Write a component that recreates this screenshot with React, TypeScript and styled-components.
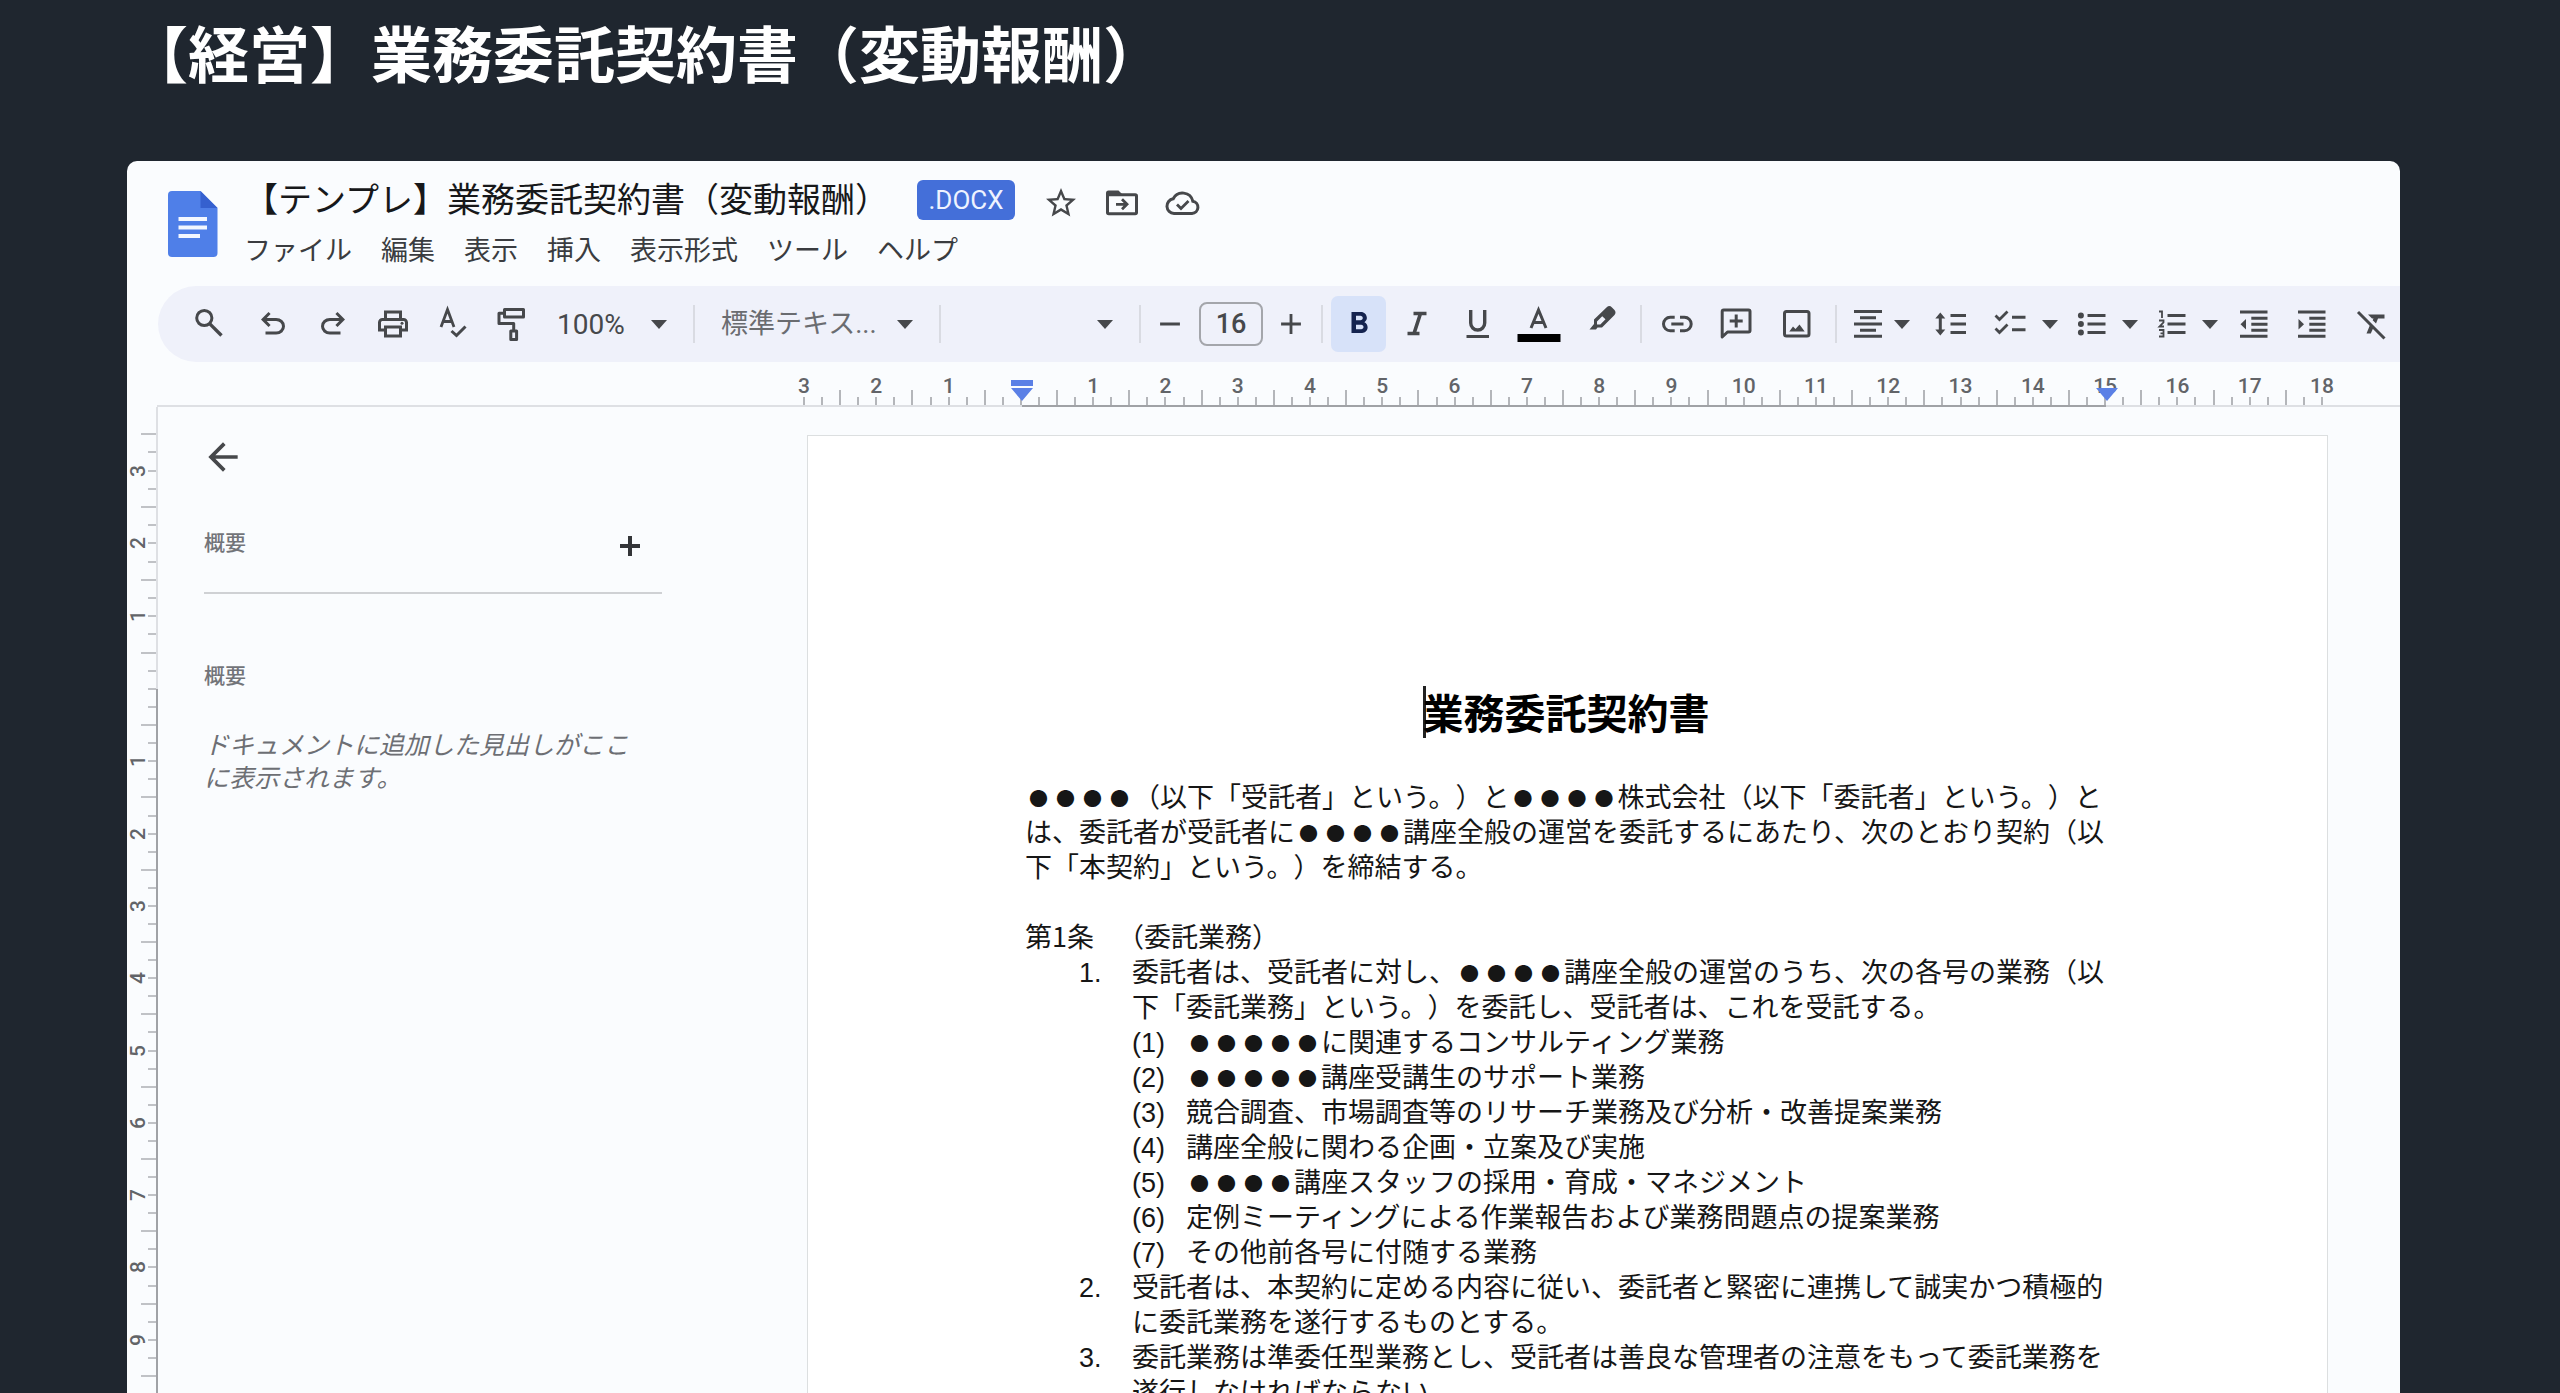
import React from "react";
import styled, { createGlobalStyle, css } from "styled-components";
import { MdAdd, MdArrowBack, MdFormatBold, MdRemove, MdStarBorder } from "react-icons/md";

const ink = "#46484b";
const uiFont = `Roboto, "Noto Sans CJK JP", sans-serif`;
const textFont = `"Noto Sans CJK JP", "Liberation Sans", sans-serif`;

const GlobalStyle = createGlobalStyle`
  * { box-sizing: border-box; }
  body {
    margin: 0;
    background: #1f262f;
    font-family: ${uiFont};
    text-spacing-trim: space-all;
  }
  h1, h2, h3, p, ol { margin: 0; padding: 0; font-weight: 400; }
  button, input, select {
    font: inherit;
    color: inherit;
    margin: 0;
    padding: 0;
    border: 0;
    background: none;
  }
`;

/* ---------- page frame ---------- */

const Page = styled.main`
  display: flex;
  flex-direction: column;
  height: 100vh;
  padding: 22px 160px 0 127px;
  overflow: hidden;
`;

const PageTitle = styled.h1`
  margin-bottom: 79px;
  font: 700 61px/60px ${textFont};
  color: #fff;
  white-space: nowrap;
`;

const Editor = styled.section`
  display: flex;
  flex: 1;
  flex-direction: column;
  min-height: 0;
  overflow: hidden;
  border-radius: 10px 10px 0 0;
  background: #fafcfe;
`;

/* ---------- header ---------- */

const Header = styled.header`
  display: flex;
  gap: 26px;
  padding: 19px 40px 20px 41px;
`;

const DocLogo = styled.svg`
  flex: none;
  width: 50px;
  height: 66px;
  margin-top: 11px;
`;

const HeaderText = styled.div`
  display: flex;
  flex-direction: column;
  gap: 16px;
`;

const TitleRow = styled.div`
  display: flex;
  align-items: center;
  gap: 28px;
  height: 40px;
`;

const TitleActions = styled.div`
  display: flex;
  gap: 25px;
  padding-top: 6px;
`;

const DocTitle = styled.h2`
  font-size: 34px;
  line-height: 40px;
  color: #17181a;
  white-space: nowrap;
`;

const FormatBadge = styled.span`
  display: flex;
  align-items: center;
  justify-content: center;
  width: 98px;
  height: 40px;
  border-radius: 6px;
  background: #446fd9;
  color: #eef3ff;
  font-size: 26px;
  line-height: 40px;
`;

const MenuBar = styled.nav`
  display: flex;
  gap: 29px;
`;

const MenuButton = styled.button`
  font-size: 27px;
  line-height: 30px;
  color: #3a3c40;
  white-space: nowrap;
`;

/* ---------- toolbar ---------- */

const Toolbar = styled.div`
  display: flex;
  flex: none;
  align-items: center;
  height: 76px;
  margin-left: 31px;
  padding-left: 17px;
  overflow: hidden;
  border-radius: 38px 0 0 38px;
  background: #eff1fa;
  color: ${ink};
`;

const IconButton = styled.button<{ $w?: number }>`
  display: flex;
  flex: none;
  align-items: center;
  justify-content: center;
  width: ${(p) => p.$w ?? 60}px;
  height: 56px;
  color: ${ink};
`;

const ActionButton = styled(IconButton)`
  width: 36px;
  height: 36px;
`;

const ToggleButton = styled(IconButton)`
  margin-left: 8px;
  border-radius: 7px;
  background: #d7e2f9;
  color: #14234f;
`;

const SplitButton = styled.button<{ $w: number }>`
  display: flex;
  flex: none;
  align-items: center;
  justify-content: space-between;
  width: ${(p) => p.$w}px;
  height: 56px;
  padding: 0 8px;
  color: ${ink};
`;

const Divider = styled.span<{ $before?: number; $after?: number }>`
  flex: none;
  width: 2px;
  height: 38px;
  margin: 0 ${(p) => p.$after ?? 0}px 0 ${(p) => p.$before ?? 0}px;
  background: #d9dbe2;
`;

const SelectBox = styled.label<{ $w: number; $pad: number; $muted?: boolean }>`
  display: flex;
  flex: none;
  align-items: center;
  width: ${(p) => p.$w}px;
  padding: 0 26px 0 ${(p) => p.$pad}px;
  font-size: ${(p) => (p.$muted ? 27 : 28)}px;
  color: ${(p) => (p.$muted ? "#6a6c70" : ink)};

  select {
    flex: 1;
    min-width: 0;
    height: 40px;
    appearance: none;
  }
  svg { color: ${ink}; }
`;

const SizeInput = styled.input`
  flex: none;
  width: 64px;
  height: 44px;
  border: 2px solid #a4a6ab;
  border-radius: 8px;
  font-size: 27px;
  font-weight: 500;
  text-align: center;
`;

const Glyph = styled.svg<{ $w?: number }>`
  flex: none;
  width: ${(p) => p.$w ?? 36}px;
  height: 36px;
  overflow: visible;
  fill: none;
  stroke: currentColor;
  stroke-width: 3;
`;

const SolidGlyph = styled(Glyph)`
  fill: currentColor;
  stroke: none;
`;

const ArrowGlyph = styled.svg`
  flex: none;
  width: 16px;
  height: 9px;
  fill: currentColor;
`;

const Arrow = () => (
  <ArrowGlyph viewBox="0 0 16 9" aria-hidden="true">
    <path d="M0 0h16L8 9z" />
  </ArrowGlyph>
);

const Lines = ({ rows }: { rows: [number, number, number][] }) => (
  <path d={rows.map(([y, from, to]) => `M${from} ${y}H${to}`).join("")} />
);

const icons = {
  search: (
    <Glyph viewBox="0 0 36 36">
      <circle cx="13.3" cy="12" r="7.6" />
      <path d="M18.6 17.6L30.5 29.5" strokeWidth="3.4" />
    </Glyph>
  ),
  undo: (
    <SolidGlyph viewBox="0 -960 960 960">
      <path d="M280-200v-80h284q63 0 109.500-40T720-420q0-60-46.500-100T564-560H312l104 104-56 56-200-200 200-200 56 56-104 104h252q97 0 166.500 63T800-420q0 94-69.500 157T564-200H280Z" />
    </SolidGlyph>
  ),
  redo: (
    <SolidGlyph viewBox="0 -960 960 960">
      <path d="M396-200q-97 0-166.500-63T160-420q0-94 69.500-157T396-640h252L544-744l56-56 200 200-200 200-56-56 104-104H396q-63 0-109.500 40T240-420q0 60 46.500 100T396-280h284v80H396Z" />
    </SolidGlyph>
  ),
  print: (
    <SolidGlyph viewBox="0 0 24 24">
      <path d="M19 8h-1V3H6v5H5c-1.660 0-3 1.340-3 3v6h4v4h12v-4h4v-6c0-1.660-1.340-3-3-3zM8 5h8v3H8V5zm8 12v2H8v-4h8v2zm2-2v-2H6v2H4v-4c0-.55.45-1 1-1h14c.55 0 1 .45 1 1v4h-2z" />
      <circle cx="18" cy="11.500" r="1" />
    </SolidGlyph>
  ),
  spell: (
    <Glyph viewBox="0 0 36 36">
      <path d="M6 21L12.500 3.500L19 21M8.500 15.500H16.500" strokeWidth="2.800" />
      <path d="M16.500 25L21.500 29.500L30.500 20.500" />
    </Glyph>
  ),
  paint: (
    <Glyph viewBox="0 0 36 36" strokeLinejoin="round">
      <path d="M11.500 3.500H30.500V11H11.500ZM11.500 7.300H6V17.500H20.700V25M17.800 25H23.600V33.500H17.800Z" />
    </Glyph>
  ),
  italic: (
    <Glyph viewBox="0 0 36 36">
      <path d="M14.500 7.500H27.500M8.500 27.500H20.500M21.500 7.500L15 27.500" strokeWidth="3.600" />
    </Glyph>
  ),
  underline: (
    <Glyph viewBox="0 0 36 36">
      <path d="M10.700 4V17a7 7 0 0 0 14 0V4" strokeWidth="3.400" />
      <path d="M6.500 30.500H29" />
    </Glyph>
  ),
  textColor: (
    <Glyph viewBox="0 0 44 36" $w={44}>
      <path d="M14 22L21.500 4L29 22M16.500 16.500H26.500" />
      <path d="M.5 32H43.500" stroke="#000" strokeWidth="8" />
    </Glyph>
  ),
  highlight: (
    <SolidGlyph viewBox="0 0 36 36" fillRule="evenodd">
      <path d="M5.500 23.500L10 18V13.500L23 1Q25.500-1 28 1.500L30.500 4Q32.500 6.500 30.500 9L18 21.500H13.500L12 23.500ZM13 15.500V18.500H16.300L21.500 13.300L18.200 10.200Z" />
    </SolidGlyph>
  ),
  link: (
    <Glyph viewBox="0 0 36 36">
      <path d="M15.700 11.300H11.200a6.700 6.700 0 0 0 0 13.400H15.700M21 11.300H25.500a6.700 6.700 0 0 1 0 13.400H21M12.300 18H24.500" />
    </Glyph>
  ),
  comment: (
    <Glyph viewBox="0 0 36 36" strokeLinejoin="round">
      <path d="M4.200 31V5.500Q4.200 4 5.700 4H30.500Q32 4 32 5.500V24.500Q32 26 30.500 26H9.500Z" />
      <path d="M18.200 8.500V21.500M11.700 15H24.700" />
    </Glyph>
  ),
  image: (
    <Glyph viewBox="0 0 36 36">
      <rect x="6.500" y="5.500" width="24.500" height="24.500" rx="2" />
      <path d="M11.300 25.500L15 20.500L17.500 23L21.500 18.500L26.700 25.500Z" fill="currentColor" stroke="none" />
    </Glyph>
  ),
  align: (
    <Glyph viewBox="0 0 36 36">
      <Lines rows={[[5.5, 4, 32], [11.7, 10, 26], [18, 4, 32], [24.2, 10, 26], [30.3, 4, 32]]} />
    </Glyph>
  ),
  spacing: (
    <Glyph viewBox="0 0 36 36">
      <Lines rows={[[9.5, 17.5, 33], [18, 17.5, 33], [26.5, 17.5, 33]]} />
      <path d="M7.300 10V26" />
      <path d="M7.300 6.500L12.300 12.500H2.300ZM7.300 29.500L12.300 23.500H2.300Z" fill="currentColor" stroke="none" />
    </Glyph>
  ),
  checklist: (
    <Glyph viewBox="0 0 36 36">
      <Lines rows={[[11.3, 20, 33.5], [23.8, 20, 33.5]]} />
      <path d="M3.500 9.500L7.500 13.500L15.500 5.500M3.500 22.500L7.500 26.500L15.500 18.500" strokeWidth="2.800" />
    </Glyph>
  ),
  bullets: (
    <Glyph viewBox="0 0 36 36">
      <Lines rows={[[9.5, 13.5, 31.5], [18, 13.5, 31.5], [26.5, 13.5, 31.5]]} />
      <path d="M6.900 9.500h.01M6.900 18h.01M6.900 26.500h.01" strokeWidth="6" strokeLinecap="round" />
    </Glyph>
  ),
  numbers: (
    <Glyph viewBox="0 0 36 36">
      <Lines rows={[[9.5, 13.5, 31.5], [18, 13.5, 31.5], [26.5, 13.5, 31.5]]} />
      <path d="M5 5.500H8V12M5 14.500H9.500V16.500L5.500 20.500H10M5 24H9.500V30.500H5M6.500 27.300H9.500" strokeWidth="1.800" />
    </Glyph>
  ),
  outdent: (
    <Glyph viewBox="0 0 36 36">
      <Lines rows={[[6, 4, 31.5], [12.2, 15.3, 31.5], [18.2, 15.3, 31.5], [24.2, 15.3, 31.5], [30.2, 4, 31.5]]} />
      <path d="M10 13V23.500L4.500 18.200Z" fill="currentColor" stroke="none" />
    </Glyph>
  ),
  indent: (
    <Glyph viewBox="0 0 36 36">
      <Lines rows={[[6, 4, 31.5], [12.2, 15.3, 31.5], [18.2, 15.3, 31.5], [24.2, 15.3, 31.5], [30.2, 4, 31.5]]} />
      <path d="M4.500 13V23.500L10 18.200Z" fill="currentColor" stroke="none" />
    </Glyph>
  ),
  clear: (
    <Glyph viewBox="0 0 36 36">
      <path d="M5 6L31.500 32.500" />
      <path d="M15 8.500H31.500V12.500H25L23 17.500L19.700 14.300L20.500 12.500H19ZM17.500 17.800L20.700 21L17.800 27.500H13.500Z" fill="currentColor" stroke="none" />
    </Glyph>
  ),
  plus: (
    <Glyph viewBox="0 0 36 36">
      <path d="M18 8V28M8 18H28" strokeWidth="4" />
    </Glyph>
  ),
  move: (
    <Glyph viewBox="0 0 36 36">
      <path d="M3.500 8V27.500Q3.500 28.800 4.800 28.800H31.200Q32.500 28.800 32.500 27.500V11Q32.500 9.700 31.200 9.700H3.500" />
      <path d="M2 11V8Q2 5.500 4.500 5.500H14.500L18.500 9.500V11Z" fill="currentColor" stroke="none" />
      <path d="M12 19.300H23M18 14.300L23 19.300L18 24.300" strokeWidth="2.800" />
    </Glyph>
  ),
  cloud: (
    <Glyph viewBox="0 0 36 36">
      <path d="M9 28.500a7.400 7.400 0 0 1-.8-14.700a10.500 10.500 0 0 1 19.600 2.400a6.200 6.200 0 0 1-.8 12.300Z" />
      <path d="M12 19.500L16 23.500L23.500 16" strokeWidth="2.800" />
    </Glyph>
  ),
};

/* ---------- rulers ---------- */

const HRuler = styled.div`
  position: relative;
  display: flex;
  flex: none;
  flex-direction: column;
  justify-content: space-between;
  height: 45px;
  margin-left: 30px;
`;

const HScale = styled.div`
  display: grid;
  grid-template-columns: repeat(85, minmax(0, 1fr));
  height: 43px;
  margin: 0 69px 0 638px;
`;

const HCell = styled.div`
  display: flex;
  flex-direction: column;
  align-items: center;
  justify-content: flex-end;
`;

const TickLabel = styled.span`
  flex: none;
  font-size: 21px;
  line-height: 22px;
  font-weight: 500;
  color: #626468;
`;

const HTick = styled.span<{ $tall: boolean }>`
  flex: none;
  width: 2px;
  height: ${(p) => (p.$tall ? 15 : 8)}px;
  background: #b4b6ba;
`;

const HLine = styled.div`
  display: grid;
  grid-template-columns: 865px minmax(0, 1084fr) minmax(0, 294fr);
  height: 2px;

  span { background: #dee0e4; }
  span:nth-child(2) { background: #a0a2a6; }
`;

const Marker = styled.svg<{ $left: number }>`
  position: absolute;
  top: 18px;
  left: ${(p) => p.$left}px;
  width: 24px;
  height: 21px;
  fill: #5b80e6;
`;

const Body = styled.div`
  display: flex;
  flex: 1;
  min-height: 0;
`;

const VRuler = styled.div`
  display: flex;
  flex: none;
  width: 31px;
`;

const VTrack = styled.div`
  flex: 1;
  padding-top: 18px;
`;

const VScale = styled.div<{ $rows: number; $height: number }>`
  display: grid;
  grid-template-rows: repeat(${(p) => p.$rows}, minmax(0, 1fr));
  height: ${(p) => p.$height}px;
`;

const VCell = styled.div`
  display: flex;
  align-items: center;
  justify-content: flex-end;

  ${TickLabel} {
    width: 20px;
    text-align: center;
    transform: rotate(-90deg);
  }
`;

const VTick = styled.span<{ $tall: boolean }>`
  flex: none;
  width: ${(p) => (p.$tall ? 15 : 8)}px;
  height: 2px;
  background: #c0c2c6;
`;

const VLine = styled.div`
  display: grid;
  grid-template-rows: 282px 1fr;
  width: 2px;

  span { background: #dee0e4; }
  span:nth-child(2) { background: #a0a2a6; }
`;

const HorizontalRuler = () => (
  <HRuler aria-hidden="true">
    <HScale>
      {Array.from({ length: 85 }, (_, i) => {
        const label = Math.abs(i / 4 - 3);
        return (
          <HCell key={i}>
            {i % 4 === 0 && label !== 0 && <TickLabel>{label}</TickLabel>}
            <HTick $tall={i % 4 === 2} />
          </HCell>
        );
      })}
    </HScale>
    <HLine><span /><span /><span /></HLine>
    <Marker $left={853} viewBox="0 0 24 21">
      <path d="M1 0H23V6H1ZM1 8H23L12 21Z" />
    </Marker>
    <Marker $left={1938} viewBox="0 0 24 21">
      <path d="M1 8H23L12 21Z" />
    </Marker>
  </HRuler>
);

const VerticalRuler = () => (
  <VRuler aria-hidden="true">
    <VTrack>
      <VScale $rows={14} $height={255}>
        {Array.from({ length: 14 }, (_, i) => (
          <VCell key={i}>
            {i % 4 === 2 && <TickLabel>{(14 - i) / 4}</TickLabel>}
            <VTick $tall={i % 4 === 0} />
          </VCell>
        ))}
      </VScale>
      <VScale $rows={40} $height={723}>
        {Array.from({ length: 40 }, (_, i) => (
          <VCell key={i}>
            {i % 4 === 0 && i > 0 && <TickLabel>{i / 4}</TickLabel>}
            <VTick $tall={i % 4 === 2} />
          </VCell>
        ))}
      </VScale>
    </VTrack>
    <VLine><span /><span /></VLine>
  </VRuler>
);

/* ---------- outline panel ---------- */

const Outline = styled.aside`
  flex: none;
  width: 649px;
  padding: 28px 145px 0 46px;
`;

const BackButton = styled.button`
  display: flex;
  align-items: center;
  justify-content: center;
  width: 38px;
  height: 44px;
  margin-bottom: 47px;
  color: ${ink};

  svg { flex: none; width: 44px; height: 44px; }
`;

const OutlineRow = styled.div`
  display: flex;
  justify-content: space-between;
  height: 38px;
  margin-bottom: 28px;
  padding-right: 14px;
`;

const AddButton = styled(ActionButton)`
  align-self: flex-end;
  color: #333538;
`;

const OutlineTitle = styled.h3`
  font: 500 21px/30px ${textFont};
  color: #727479;
`;

const OutlineRule = styled.hr`
  height: 2px;
  margin: 0 0 65px;
  border: 0;
  background: #cfd1d4;
`;

const OutlineHint = styled.p`
  margin-top: 38px;
  padding-right: 16px;
  font: italic 400 25px/33px ${textFont};
  color: #6d6f74;
`;

/* ---------- document ---------- */

const Paper = styled.article`
  flex: 1;
  min-width: 0;
  margin: 28px 72px 0 0;
  padding: 250px 220px 0 217px;
  border: 1px solid #dcdfe0;
  border-bottom: 0;
  background: #fff;
  color: #161616;
  font: 400 27px/35px ${textFont};
`;

const PaperTitle = styled.h2`
  display: flex;
  justify-content: center;
  margin-bottom: 40px;
  font-size: 41px;
  line-height: 50px;
  font-weight: 700;
  color: #000;

  span {
    width: 3px;
    height: 52px;
    margin-right: -3px;
    background: #222;
  }
`;

const ArticleTitle = styled.h3`
  display: flex;
  margin-top: 35px;
  font-size: 27px;
  line-height: 35px;

  span { width: 92px; }
`;

const listLine = css`
  display: grid;
  align-items: baseline;
  list-style: none;
`;

const Clauses = styled.ol`
  padding-left: 54px;
`;

const Clause = styled.li`
  ${listLine}
  grid-template-columns: 53px minmax(0, 1fr);
`;

const Items = styled.ol`
  padding: 0;
`;

const Item = styled.li`
  ${listLine}
  grid-template-columns: 54px minmax(0, 1fr);
`;

const Num = styled.span`
  font-family: "Liberation Sans", sans-serif;
  line-height: 24px;
`;

const DotMark = styled.span`
  display: inline-block;
  width: 27px;
  font-size: 19px;
  line-height: 20px;
  vertical-align: 1px;
  text-align: center;
`;

const Dots = ({ n = 4 }: { n?: number }) => (
  <>
    {Array.from({ length: n }, (_, i) => (
      <DotMark key={i}>●</DotMark>
    ))}
  </>
);

const duties: React.ReactNode[] = [
  <><Dots n={5} />に関連するコンサルティング業務</>,
  <><Dots n={5} />講座受講生のサポート業務</>,
  "競合調査、市場調査等のリサーチ業務及び分析・改善提案業務",
  "講座全般に関わる企画・立案及び実施",
  <><Dots />講座スタッフの採用・育成・マネジメント</>,
  "定例ミーティングによる作業報告および業務問題点の提案業務",
  "その他前各号に付随する業務",
];

const menus = ["ファイル", "編集", "表示", "挿入", "表示形式", "ツール", "ヘルプ"];

export default function App() {
  return (
    <Page>
      <GlobalStyle />
      <PageTitle>【経営】業務委託契約書（変動報酬）</PageTitle>
      <Editor>
        <Header>
          <DocLogo viewBox="0 0 50 66" aria-hidden="true">
            <path d="M4 0H32.500L49.500 17V62a4 4 0 0 1-4 4H4a4 4 0 0 1-4-4V4a4 4 0 0 1 4-4Z" fill="#4f7fe8" />
            <path d="M32.500 0L49.500 17H32.500Z" fill="#3560cf" />
            <path d="M10.500 28H39M10.500 36.500H39M10.500 45H32" stroke="#f3f7ff" strokeWidth="4" />
          </DocLogo>
          <HeaderText>
            <TitleRow>
              <DocTitle>【テンプレ】業務委託契約書（変動報酬）</DocTitle>
              <FormatBadge>.DOCX</FormatBadge>
              <TitleActions>
                <ActionButton aria-label="スターを付ける"><MdStarBorder size={36} /></ActionButton>
                <ActionButton aria-label="移動">{icons.move}</ActionButton>
                <ActionButton aria-label="保存状態">{icons.cloud}</ActionButton>
              </TitleActions>
            </TitleRow>
            <MenuBar>
              {menus.map((m) => <MenuButton key={m}>{m}</MenuButton>)}
            </MenuBar>
          </HeaderText>
        </Header>

        <Toolbar role="toolbar">
          <IconButton $w={68} aria-label="検索">{icons.search}</IconButton>
          <IconButton aria-label="元に戻す">{icons.undo}</IconButton>
          <IconButton aria-label="やり直し">{icons.redo}</IconButton>
          <IconButton aria-label="印刷">{icons.print}</IconButton>
          <IconButton aria-label="スペルチェック">{icons.spell}</IconButton>
          <IconButton $w={56} aria-label="書式の貼り付け">{icons.paint}</IconButton>
          <SelectBox $w={154} $pad={18}>
            <select aria-label="ズーム"><option>100%</option></select>
            <Arrow />
          </SelectBox>
          <Divider />
          <SelectBox $w={244} $pad={26} $muted>
            <select aria-label="スタイル"><option>標準テキス...</option></select>
            <Arrow />
          </SelectBox>
          <Divider />
          <SelectBox $w={198} $pad={26}>
            <select aria-label="フォント"><option></option></select>
            <Arrow />
          </SelectBox>
          <Divider />
          <IconButton $w={58} aria-label="縮小"><MdRemove size={34} /></IconButton>
          <SizeInput aria-label="フォントサイズ" defaultValue="16" />
          <IconButton $w={56} aria-label="拡大"><MdAdd size={34} /></IconButton>
          <Divider $before={2} />
          <ToggleButton $w={55} aria-label="太字"><MdFormatBold size={36} /></ToggleButton>
          <IconButton $w={62} aria-label="斜体">{icons.italic}</IconButton>
          <IconButton aria-label="下線">{icons.underline}</IconButton>
          <IconButton $w={62} aria-label="文字色">{icons.textColor}</IconButton>
          <IconButton $w={64} aria-label="ハイライト">{icons.highlight}</IconButton>
          <Divider $before={6} $after={6} />
          <IconButton $w={58} aria-label="リンク">{icons.link}</IconButton>
          <IconButton aria-label="コメント">{icons.comment}</IconButton>
          <IconButton aria-label="画像">{icons.image}</IconButton>
          <Divider $before={9} $after={5} />
          <SplitButton $w={76} aria-label="配置">{icons.align}<Arrow /></SplitButton>
          <IconButton $w={66} aria-label="行間隔">{icons.spacing}</IconButton>
          <SplitButton $w={82} aria-label="チェックリスト">{icons.checklist}<Arrow /></SplitButton>
          <SplitButton $w={80} aria-label="箇条書き">{icons.bullets}<Arrow /></SplitButton>
          <SplitButton $w={80} aria-label="番号付きリスト">{icons.numbers}<Arrow /></SplitButton>
          <IconButton $w={56} aria-label="インデント減">{icons.outdent}</IconButton>
          <IconButton aria-label="インデント増">{icons.indent}</IconButton>
          <IconButton $w={58} aria-label="書式をクリア">{icons.clear}</IconButton>
        </Toolbar>

        <HorizontalRuler />

        <Body>
          <VerticalRuler />
          <Outline>
            <BackButton aria-label="閉じる"><MdArrowBack /></BackButton>
            <OutlineRow>
              <OutlineTitle>概要</OutlineTitle>
              <AddButton aria-label="概要を追加">{icons.plus}</AddButton>
            </OutlineRow>
            <OutlineRule />
            <OutlineTitle>概要</OutlineTitle>
            <OutlineHint>ドキュメントに追加した見出しがここに表示されます。</OutlineHint>
          </Outline>
          <Paper>
            <PaperTitle><span />業務委託契約書</PaperTitle>
            <p>
              <Dots />（以下「受託者」という。）と<Dots />株式会社（以下「委託者」という。）とは、委託者が受託者に<Dots />講座全般の運営を委託するにあたり、次のとおり契約（以下「本契約」という。）を締結する。
            </p>
            <ArticleTitle><span>第1条</span>（委託業務）</ArticleTitle>
            <Clauses>
              <Clause>
                <Num>1.</Num>
                <div>
                  <p>
                    委託者は、受託者に対し、<Dots />講座全般の運営のうち、次の各号の業務（以下「委託業務」という。）を委託し、受託者は、これを受託する。
                  </p>
                  <Items>
                    {duties.map((d, i) => (
                      <Item key={i}>
                        <Num>({i + 1})</Num>
                        <p>{d}</p>
                      </Item>
                    ))}
                  </Items>
                </div>
              </Clause>
              <Clause>
                <Num>2.</Num>
                <p>受託者は、本契約に定める内容に従い、委託者と緊密に連携して誠実かつ積極的に委託業務を遂行するものとする。</p>
              </Clause>
              <Clause>
                <Num>3.</Num>
                <p>委託業務は準委任型業務とし、受託者は善良な管理者の注意をもって委託業務を遂行しなければならない。</p>
              </Clause>
            </Clauses>
          </Paper>
        </Body>
      </Editor>
    </Page>
  );
}
